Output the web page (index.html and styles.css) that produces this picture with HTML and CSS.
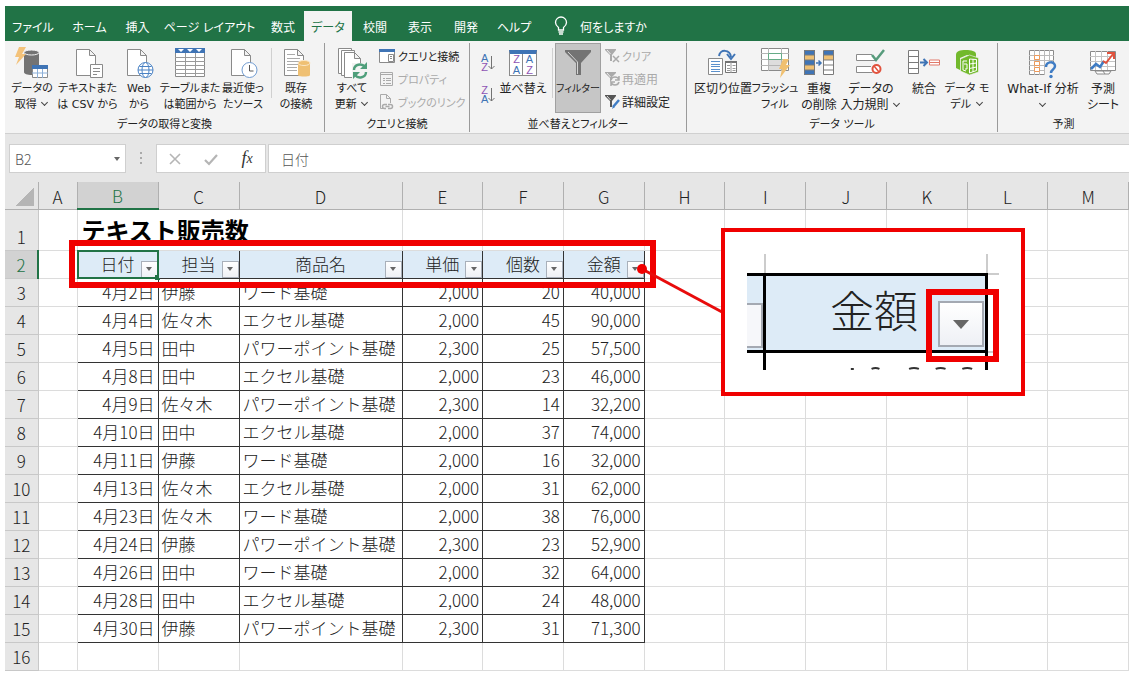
FILE: index.html
```html
<!DOCTYPE html>
<html lang="ja">
<head>
<meta charset="utf-8">
<title>テキスト販売数</title>
<link rel="stylesheet" href="styles.css">
</head>
<body>
<div class="window">
  <nav class="tabs">
    <button class="tab">ファイル</button>
    <button class="tab">ホーム</button>
    <button class="tab">挿入</button>
    <button class="tab">ページ レイアウト</button>
    <button class="tab">数式</button>
    <button class="tab tab-active">データ</button>
    <button class="tab">校閲</button>
    <button class="tab">表示</button>
    <button class="tab">開発</button>
    <button class="tab">ヘルプ</button>
    <button class="tab tell-me">
      <svg width="14" height="20" viewBox="0 0 14 20" fill="none" stroke="#fff" stroke-width="1.3"><path d="M4.500 14v-2.500C2.500 10 1.500 8.500 1.500 6.500a5.500 5.500 0 0 1 11 0c0 2-1 3.500-3 5V14zM4.500 16h5M5 18h4"/></svg>
      何をしますか
    </button>
  </nav>

  <div class="ribbon">
    <section class="group">
      <div class="tools tools-get">
        <button class="tool">
          <svg width="34" height="32" viewBox="0 0 34 32"><path d="M9 6v19c0 2 3 3 8 3s7-1 7-3V6z" fill="#737373"/><ellipse cx="16.500" cy="5.500" rx="7.500" ry="2.500" fill="#737373" stroke="#f3f3f3"/><path d="M4 0h7L7 7h4L1 18l3-8H0z" fill="#f3c27a"/><path d="M17.500 18.500h15v12h-15z" fill="#fff" stroke="#8a8a8a"/><path d="M17 18h16v4H17z" fill="#3f74b5"/><path d="M17 26h16M22.500 22v9M27.500 22v9" stroke="#8db0d8"/></svg>
          <span>データの<br>取得 <i class="chev"></i></span>
        </button>
        <button class="tool">
          <svg width="30" height="32" viewBox="0 0 30 32" fill="#fff" stroke="#8a8a8a"><path d="M3.500 2.500h13l6 6v20h-19zM16.500 2.500v6h6"/><path d="M17.500 17.500h12v13h-12z"/><path d="M20 21.500h7M20 24.500h7M20 27.500h4"/></svg>
          <span>テキストまた<br>は CSV から</span>
        </button>
        <button class="tool">
          <svg width="30" height="32" viewBox="0 0 30 32" fill="#fff" stroke="#8a8a8a"><path d="M3.500 2.500h13l6 6v20h-19zM16.500 2.500v6h6"/><g stroke="#4a82c4"><circle cx="21.500" cy="23" r="7.500"/><ellipse cx="21.500" cy="23" rx="3.500" ry="7.500"/><path d="M14 23h15M15.500 19.500h12M15.500 26.500h12"/></g></svg>
          <span>Web<br>から</span>
        </button>
        <button class="tool">
          <svg width="30" height="32" viewBox="0 0 30 32"><path d="M.5 1.500h29v28H.5z" fill="#fff" stroke="#8a8a8a"/><path d="M0 1h30v5H0z" fill="#3f74b5"/><path d="M3 2h6L6 5zM12 2h6l-3 3zM21 2h6l-3 3z" fill="#fff"/><path d="M0 10.500h30M0 14.500h30M0 18.500h30M0 22.500h30M0 26.500h30M10.500 6v24M20.500 6v24" stroke="#9a9a9a"/></svg>
          <span>テーブルまた<br>は範囲から</span>
        </button>
        <button class="tool">
          <svg width="30" height="32" viewBox="0 0 30 32" fill="#fff" stroke="#8a8a8a"><path d="M3.500 2.500h13l6 6v20h-19zM16.500 2.500v6h6"/><circle cx="21.500" cy="23" r="7.500" stroke="#6f9bd1"/><path d="M21.500 18v6h4" fill="none" stroke="#555"/></svg>
          <span>最近使っ<br>たソース</span>
        </button>
        <i class="divider"></i>
        <button class="tool">
          <svg width="30" height="32" viewBox="0 0 30 32"><path d="M3.500 2.500h13l6 6v20h-19zM16.500 2.500v6h6" fill="#fff" stroke="#8a8a8a"/><path d="M6 7.500h8M6 11.500h13M6 14.500h13M6 17.500h11M6 20.500h10M6 23.500h10" stroke="#aaa"/><path d="M17 16v12c0 2 12 2 12 0V16z" fill="#efc073"/><ellipse cx="23" cy="16" rx="6" ry="2.500" fill="#efc073" stroke="#fbe7c6"/></svg>
          <span>既存<br>の接続</span>
        </button>
      </div>
      <h2 class="group-name">データの取得と変換</h2>
    </section>

    <section class="group">
      <div class="tools tools-query">
        <button class="tool">
          <svg width="32" height="32" viewBox="0 0 32 32"><g fill="#fff" stroke="#8a8a8a"><path d="M2.500 1.500h13v25h-13z"/><path d="M5.500 3.500h13v25h-13z"/><path d="M8.500 5.500h10l6 6v19h-16zM18.500 5.500v6h6"/></g><path d="M16 16h16v16H16z" fill="#f3f3f3"/><g fill="none" stroke="#4f9f7b" stroke-width="2.400"><path d="M18 23c0-6 8-7 11-3M30 25c0 6-8 7-11 3"/></g><path d="M31 15v7h-7zM17 32v-7h7z" fill="#4f9f7b"/></svg>
          <span>すべて<br>更新 <i class="chev"></i></span>
        </button>
        <div class="stack">
          <button class="mini"><svg width="16" height="16" viewBox="0 0 16 16"><path d="M.5 1.500h15v13H.5z" fill="#fff" stroke="#8a8a8a"/><path d="M0 1h16v3H0z" fill="#3f74b5"/><path d="M9.500 6.500h5v7h-5zM11 8.500h2M11 10.500h2" fill="none" stroke="#8a8a8a"/></svg>クエリと接続</button>
          <button class="mini" disabled><svg width="16" height="16" viewBox="0 0 16 16" fill="none" stroke="#aaa"><path d="M1.500 1.500h12v13h-12zM1.500 3.500h12M4 7.500h2M7 7.500h5M4 9.500h2M7 9.500h5M4 12.500h2M7 12.500h5"/></svg>プロパティ</button>
          <button class="mini" disabled><svg width="16" height="16" viewBox="0 0 16 16" fill="none" stroke="#aaa"><path d="M5 14.500H1.500V.5h6l4 4V9M7.500.5v4h4"/><path d="M7 14.500H5.500a2 2 0 0 1 0-4H8M9 10.500h2.500a2 2 0 0 1 0 4H9M6.500 12.500h4" stroke-width="1.500"/></svg>ブックのリンク</button>
        </div>
      </div>
      <h2 class="group-name">クエリと接続</h2>
    </section>

    <section class="group">
      <div class="tools tools-sort">
        <div class="sorters">
          <button class="sorter" aria-label="昇順"><span class="az"><b class="a">A</b><b class="z">Z</b></span><svg width="7" height="16" viewBox="0 0 7 16" fill="none" stroke="#737373"><path d="M3.500 1v13M.5 11l3 3 3-3"/></svg></button>
          <button class="sorter" aria-label="降順"><span class="az"><b class="z">Z</b><b class="a">A</b></span><svg width="7" height="16" viewBox="0 0 7 16" fill="none" stroke="#737373"><path d="M3.500 1v13M.5 11l3 3 3-3"/></svg></button>
        </div>
        <button class="tool">
          <span class="sort-icon"><b class="z">Z</b><b class="a">A</b><b class="a">A</b><b class="z">Z</b></span>
          <span>並べ替え</span>
        </button>
        <i class="divider"></i>
        <button class="tool tool-on">
          <svg width="30" height="32" viewBox="0 0 30 32"><path d="M2 3h26v2L18 16v12h-5V16L2 5z" fill="#737373"/><path d="M5 5l9.500 10v12" fill="none" stroke="#d5d5d5"/></svg>
          <span class="kana">フィルター</span>
        </button>
        <div class="stack">
          <button class="mini kana" disabled><svg width="16" height="16" viewBox="0 0 16 16" fill="none" stroke="#aaa"><path d="M0 1h11v1L7 7v6H5V7L0 2z" fill="#aaa" stroke="none"/><path d="M2 2l3.500 4" stroke="#eee"/><path d="M8 8l6 6M14 8l-6 6" stroke-width="1.500"/></svg>クリア</button>
          <button class="mini" disabled><svg width="16" height="16" viewBox="0 0 16 16" fill="none" stroke="#aaa"><path d="M0 1h11v1L7 6v2L5 12V7L0 2z" fill="#aaa" stroke="none"/><path d="M2 2l3.500 4" stroke="#eee"/><path d="M6 9c1-4 7-4 8 0M14 5v4h-4M14 11c-1 4-7 4-8 0M6 15v-4h4" stroke-width="1.500"/></svg>再適用</button>
          <button class="mini"><svg width="16" height="16" viewBox="0 0 16 16" fill="none"><path d="M0 1h11v1L7 7v6H5V7L0 2z" fill="#555"/><path d="M2 2l3.500 4" stroke="#ddd"/><path d="M14 6l-6 7" stroke="#3f7cc4" stroke-width="2.500"/><path d="M8 12l-1 3 3-2z" fill="#3f7cc4"/></svg>詳細設定</button>
        </div>
      </div>
      <h2 class="group-name">並べ替えとフィルター</h2>
    </section>

    <section class="group">
      <div class="tools tools-data">
        <button class="tool">
          <svg width="30" height="32" viewBox="0 0 30 32"><path d="M.5 11.500h14v16H.5z" fill="#fff" stroke="#8a8a8a"/><path d="M3 14.500h9M3 17.500h9M3 19.500h9M3 22.500h9M3 24.500h9" stroke="#5c91cc"/><path d="M17.500 14.500h11v11h-11z" fill="#fff" stroke="#737373"/><path d="M17 14h12v2H17z" fill="#737373"/><path d="M23 15v11M19 18.500h3M24.500 18.500h3M19 21.500h3M24.500 21.500h3M19 23.500h3M24.500 23.500h3" stroke="#999"/><path d="M11 9c1-7 11-7 12 1" fill="none" stroke="#3f74b5" stroke-width="2"/><path d="M19 7l4 5 4-5" fill="none" stroke="#3f74b5" stroke-width="2"/></svg>
          <span>区切り位置</span>
        </button>
        <button class="tool">
          <svg width="30" height="32" viewBox="0 0 30 32"><path d="M1.500 1.500h27v22h-27z" fill="#fff" stroke="#8a8a8a"/><path d="M8 13h14v10H8z" fill="#ddd"/><path d="M1 6.500h28M1 12.500h28M1 18.500h28M8.500 1v23M21.500 1v23" stroke="#b5b5b5"/><path d="M8.500 6.500h13v6h-13z" fill="#fff" stroke="#65ac87"/><path d="M23 12h6l-3 6h4L20 31l2-9h-3z" fill="#f0c070"/></svg>
          <span class="kana">フラッシュ<br>フィル</span>
        </button>
        <button class="tool">
          <svg width="30" height="32" viewBox="0 0 30 32"><path d="M0 3h11v25H0z" fill="#3f74b5"/><path d="M1 8h9v5H1zM1 18h9v5H1z" fill="#efc073"/><path d="M.5 3.500h10v24H.5zM.5 8h10M.5 13h10M.5 18h10M.5 23h10" fill="none" stroke="#7a7a7a"/><path d="M20 3h10v25H20z" fill="#fff"/><path d="M20 3h10v5H20z" fill="#3f74b5"/><path d="M20 8h10v5H20z" fill="#efc073"/><path d="M19.500 3.500h10v24h-10zM20 8h10M20 13h10M20 18h10M20 23h10" fill="none" stroke="#7a7a7a"/><path d="M12 16h5M14.500 13.500L17 16l-2.500 2.500" fill="none" stroke="#3f74b5" stroke-width="1.500"/></svg>
          <span>重複<br>の削除</span>
        </button>
        <button class="tool">
          <svg width="30" height="32" viewBox="0 0 30 32"><path d="M16 7.500H.5v6h19v-2M15 19.500H.5v6h16" fill="#fff" stroke="#8a8a8a"/><path d="M16 8l4 5 8-10" fill="none" stroke="#579b7c" stroke-width="2.500"/><circle cx="20.500" cy="22" r="4" fill="#fff" stroke="#e1523d" stroke-width="2"/><path d="M18 19l5 6" stroke="#e1523d" stroke-width="1.500"/></svg>
          <span>データの<br>入力規則 <i class="chev"></i></span>
        </button>
        <button class="tool">
          <svg width="32" height="32" viewBox="0 0 32 32"><path d="M.5 3.500h10v23H.5zM.5 9.500h10M.5 15.500h10M.5 21.500h10" fill="#fff" stroke="#7a7a7a"/><path d="M12 15.500h7M15.500 12l3.500 3.500-3.500 3.500" fill="none" stroke="#3f74b5" stroke-width="2"/><path d="M21.500 13h10v5h-10zM21 15.500h10" fill="#fff" stroke="#e0796a"/></svg>
          <span>統合</span>
        </button>
        <button class="tool">
          <svg width="24" height="32" viewBox="0 0 24 32"><path d="M1 8c0-4 4-5 10-5 5 0 10 1 10 4v3l-9-2-7 3v12l-4-2z" fill="#72b92c"/><path d="M5.500 12l9-4 9 3v14l-9 3-9-4z" fill="#72b92c" stroke="#f3f3f3" stroke-width=".6"/><path d="M14.500 12v14l7-2.500V12.500zM14.500 17l7-1M14.500 21.500l7-1.500M18 12v13" fill="none" stroke="#fff" stroke-width="1"/><path d="M12 14H8v9l3 1M9 17h3v5h-2" fill="none" stroke="#fff" stroke-width="1"/></svg>
          <span class="kana">データ モ<br>デル <i class="chev"></i></span>
        </button>
      </div>
      <h2 class="group-name">データ ツール</h2>
    </section>

    <section class="group">
      <div class="tools tools-forecast">
        <button class="tool">
          <svg width="30" height="32" viewBox="0 0 30 32"><path d="M1.500 3.500h24v24h-24z" fill="#fff" stroke="#8a8a8a"/><path d="M1 8.500h25M1 13.500h25M1 18.500h25M1 23.500h25M6.500 3v25M11.500 3v25M16.500 3v25M21.500 3v25" stroke="#bbb"/><path d="M6.500 8.500h5v4h-5zM6.500 14.500h5v4h-5zM6.500 20.500h5v4h-5z" fill="#fff" stroke="#ee9a5a"/><path d="M17 15h11v16H17z" fill="#f3f3f3"/><path d="M18 20c0-6 9-6 9-1 0 4-4 3-4 7" fill="none" stroke="#3f7cc4" stroke-width="2.500"/><circle cx="23" cy="29.500" r="1.700" fill="#3f7cc4"/></svg>
          <span>What-If 分析<br><i class="chev"></i></span>
        </button>
        <button class="tool">
          <svg width="28" height="32" viewBox="0 0 28 32"><path d="M1.500 4.500h25v19h-25z" fill="#fff" stroke="#8a8a8a"/><path d="M1 9.500h25M1 14.500h25M1 19.500h25M6.500 4v19M12.500 4v19M18.500 4v19" stroke="#c4c4c4"/><path d="M6 24h8l2 3H8zM14 24h8l-2 3h-4" fill="#fff" stroke="#8a8a8a"/><path d="M2 22l5-5 4 3 4-6" fill="none" stroke="#3f7cc4" stroke-width="2.500"/><path d="M14 14l3 2 7-9M18 6h7v6" fill="none" stroke="#e1523d" stroke-width="2"/></svg>
          <span>予測<br>シート</span>
        </button>
      </div>
      <h2 class="group-name">予測</h2>
    </section>
  </div>

  <div class="formula-row">
    <div class="name-box"><input aria-label="名前ボックス" value="B2"><i class="caret"></i></div>
    <i class="grip"></i>
    <div class="entry-tools">
      <button aria-label="キャンセル"><svg width="14" height="14" viewBox="0 0 14 14" fill="none" stroke="#b5b5b5" stroke-width="1.600"><path d="M2 2l10 10M12 2L2 12"/></svg></button>
      <button aria-label="入力"><svg width="14" height="14" viewBox="0 0 14 14" fill="none" stroke="#b5b5b5" stroke-width="2.200"><path d="M1 8l4 4 8-9"/></svg></button>
      <button aria-label="関数の挿入" class="fx">f<small>x</small></button>
    </div>
    <input class="formula" aria-label="数式バー" value="日付">
  </div>

  <div class="sheet">
    <table class="grid">
      <colgroup><col class="w-row"><col class="w-a"><col class="w-b"><col class="w-b"><col class="w-d"><col span="9"></colgroup>
      <thead>
        <tr><th class="corner"><th>A<th class="col-on">B<th>C<th>D<th>E<th>F<th>G<th>H<th>I<th>J<th>K<th>L<th>M</tr>
      </thead>
      <tbody>
        <tr class="title-row"><th>1<td><td class="title" colspan="3">テキスト販売数<td><td><td><td><td><td><td><td><td></tr>
        <tr class="head-row"><th class="row-on">2<td>
          <td class="h">日付<button class="filter" aria-label="日付の絞り込み"><i class="caret"></i></button><i class="selection"></i>
          <td class="h">担当<button class="filter" aria-label="担当の絞り込み"><i class="caret"></i></button>
          <td class="h">商品名<button class="filter" aria-label="商品名の絞り込み"><i class="caret"></i></button>
          <td class="h">単価<button class="filter" aria-label="単価の絞り込み"><i class="caret"></i></button>
          <td class="h">個数<button class="filter" aria-label="個数の絞り込み"><i class="caret"></i></button>
          <td class="h">金額<button class="filter" aria-label="金額の絞り込み"><i class="caret"></i></button>
          <td><td><td><td><td><td></tr>
        <tr><th>3<td><td class="n">4月2日<td class="t">伊藤<td class="t">ワード基礎<td class="n">2,000<td class="n">20<td class="n">40,000<td><td><td><td><td><td></tr>
        <tr><th>4<td><td class="n">4月4日<td class="t">佐々木<td class="t">エクセル基礎<td class="n">2,000<td class="n">45<td class="n">90,000<td><td><td><td><td><td></tr>
        <tr><th>5<td><td class="n">4月5日<td class="t">田中<td class="t">パワーポイント基礎<td class="n">2,300<td class="n">25<td class="n">57,500<td><td><td><td><td><td></tr>
        <tr><th>6<td><td class="n">4月8日<td class="t">田中<td class="t">エクセル基礎<td class="n">2,000<td class="n">23<td class="n">46,000<td><td><td><td><td><td></tr>
        <tr><th>7<td><td class="n">4月9日<td class="t">佐々木<td class="t">パワーポイント基礎<td class="n">2,300<td class="n">14<td class="n">32,200<td><td><td><td><td><td></tr>
        <tr><th>8<td><td class="n">4月10日<td class="t">田中<td class="t">エクセル基礎<td class="n">2,000<td class="n">37<td class="n">74,000<td><td><td><td><td><td></tr>
        <tr><th>9<td><td class="n">4月11日<td class="t">伊藤<td class="t">ワード基礎<td class="n">2,000<td class="n">16<td class="n">32,000<td><td><td><td><td><td></tr>
        <tr><th>10<td><td class="n">4月13日<td class="t">佐々木<td class="t">エクセル基礎<td class="n">2,000<td class="n">31<td class="n">62,000<td><td><td><td><td><td></tr>
        <tr><th>11<td><td class="n">4月23日<td class="t">佐々木<td class="t">ワード基礎<td class="n">2,000<td class="n">38<td class="n">76,000<td><td><td><td><td><td></tr>
        <tr><th>12<td><td class="n">4月24日<td class="t">伊藤<td class="t">パワーポイント基礎<td class="n">2,300<td class="n">23<td class="n">52,900<td><td><td><td><td><td></tr>
        <tr><th>13<td><td class="n">4月26日<td class="t">田中<td class="t">ワード基礎<td class="n">2,000<td class="n">32<td class="n">64,000<td><td><td><td><td><td></tr>
        <tr><th>14<td><td class="n">4月28日<td class="t">田中<td class="t">エクセル基礎<td class="n">2,000<td class="n">24<td class="n">48,000<td><td><td><td><td><td></tr>
        <tr><th>15<td><td class="n">4月30日<td class="t">伊藤<td class="t">パワーポイント基礎<td class="n">2,300<td class="n">31<td class="n">71,300<td><td><td><td><td><td></tr>
        <tr><th>16<td><td><td><td><td><td><td><td><td><td><td><td><td></tr>
      </tbody>
    </table>

    <div class="outline"></div>
    <svg class="leader" width="90" height="54" viewBox="0 0 90 54"><path d="M6 7l80 43" stroke="#e80c0c" stroke-width="3"/><circle cx="6" cy="7" r="5" fill="#f00000"/></svg>
    <div class="callout">
      <div class="zoomed">
        <i class="z-top"></i><i class="z-top"></i><i></i>
        <div class="z-prev"><i class="z-edge"></i></div>
        <div class="z-cell">金額
          <span class="z-mark"><button class="z-filter" aria-label="金額の絞り込みを開く"><i class="z-caret"></i></button></span>
        </div>
        <i class="z-out"></i>
        <i class="z-under"></i>
        <svg class="z-next" width="222" height="17" viewBox="0 0 222 17" fill="none" stroke="#333" stroke-width="2"><path d="M86 16h3M107 16q4-2 8 0M145 16q5-2 10 0M172 16q5-2 10 0M199 16q5-2 10 0"/></svg>
        <i></i>
      </div>
    </div>
  </div>
</div>
</body>
</html>
```

FILE: styles.css
```css
* { box-sizing: border-box; }
body {
  margin: 0;
  padding: 6px 8px 8px 5px;
  background: #fff;
  color: #222;
  font-family: "DejaVu Sans", "Noto Sans CJK JP", sans-serif;
  font-size: 12px;
}
button, input { font: inherit; color: inherit; margin: 0; padding: 0; border: 0; background: none; }
svg { display: block; flex: none; }
.window { background: #e6e6e6; }

/* tab strip */
.tabs {
  display: grid;
  grid-template-columns: 56px 57px 39px 105px 42px 48px 46px 44px 48px 48px 1fr;
  height: 35px;
  padding-top: 5px;
  background: #217346;
  color: #fff;
  font-feature-settings: "palt";
}
.tab { white-space: nowrap; }
.tab-active { background: #f3f3f3; color: #217346; }
.tell-me { display: flex; align-items: center; gap: 12px; padding-left: 16px; }

/* ribbon */
.ribbon {
  display: grid;
  grid-template-columns: 319fr 145fr 217fr 311fr 132fr;
  padding: 2px 0 1px;
  background: #f3f3f3;
  border-bottom: 1px solid #d0d0d0;
  font-feature-settings: "palt";
}
.group { min-width: 0; }
.group + .group { border-left: 1px solid #9a9a9a; }
.tools { display: grid; height: 75px; }
.tools-get { grid-template-columns: 54px 57px 46px 56px 50px 6px 44px; font-size: 11px; }
.tools-query { grid-template-columns: 54px 1fr; font-size: 11px; }
.tools-sort { grid-template-columns: 26px 54px 5px 46px 1fr; }
.tools-data { grid-template-columns: 60px 44px 44px 60px 46px 40px; padding-left: 6px; }
.tools-forecast { grid-template-columns: 90px 30px; }
.kana { font-size: 11px; }
.tool {
  display: flex;
  flex-direction: column;
  align-items: center;
  gap: 2px;
  padding-top: 4px;
  line-height: 16px;
  white-space: nowrap;
}
.tool-on { height: 70px; background: #c6c6c6; border: 1px solid #a0a0a0; padding-top: 3px; }
.tool-on .kana { font-size: 10px; }
.group-name { margin: 0; font-size: 11px; font-weight: 400; line-height: 14px; text-align: center; }
.divider { width: 1px; height: 50px; margin: 5px auto 0; background: #d0d0d0; }
.chev {
  display: inline-block;
  width: 5px;
  height: 5px;
  margin: 0 2px 3px;
  border: solid #444;
  border-width: 0 1px 1px 0;
  transform: rotate(45deg);
}
.stack { display: grid; grid-template-rows: repeat(3, 23px); padding-top: 1px; }
.mini { display: flex; align-items: center; gap: 3px; white-space: nowrap; }
.tools-sort .stack { padding-left: 4px; }
.tools-sort .mini { gap: 1px; }
.mini:disabled { color: #aaa; }
.sorters { display: grid; grid-template-rows: 32px 32px; padding: 4px 0 0 11px; }
.sorter { display: flex; align-items: center; }
.az { display: grid; line-height: 9px; font-size: 11px; font-family: "Liberation Sans", sans-serif; }
.a { color: #3f74b5; }
.z { color: #8f55b5; }
.az b, .sort-icon b { font-weight: 400; }
.sort-icon {
  display: grid;
  grid-template-columns: 1fr 1fr;
  width: 28px;
  height: 26px;
  margin: 3px 0;
  border: 1px solid #8a8a8a;
  border-top: 4px solid #3f74b5;
  background: linear-gradient(90deg, #fff 12px, #8a8a8a 12px, #8a8a8a 13px, #fff 13px);
  font: 11px/10px "Liberation Sans", sans-serif;
  text-align: center;
}

/* formula row */
.formula-row {
  display: flex;
  height: 48px;
  padding: 10px 0 9px 4px;
  color: #555;
  font-family: "Noto Sans CJK JP", sans-serif;
  font-size: 14px;
  font-weight: 300;
}
.name-box, .entry-tools, .formula { background: #fff; border: 1px solid #cfcfcf; }
.name-box { display: flex; align-items: center; width: 117px; padding: 0 5px; }
.name-box input { flex: 1; min-width: 0; }
.caret { border: 3px solid transparent; border-top: 4px solid #666; border-bottom: 0; }
.grip { width: 2px; height: 12px; margin: 8px 14px; background: repeating-linear-gradient(#aaa 0 2px, transparent 2px 5px); }
.entry-tools { display: grid; grid-template-columns: repeat(3, 36px); width: 110px; margin-right: 2px; }
.entry-tools button { display: flex; align-items: center; justify-content: center; }
.entry-tools .fx { font: italic 18px "Liberation Serif", serif; color: #333; }
.fx small { font-size: 14px; }
.formula { flex: 1; min-width: 0; padding: 0 12px; border-right: 0; }

/* worksheet */
.sheet { position: relative; font-family: "Noto Sans CJK JP", sans-serif; font-size: 17px; font-weight: 300; }
.grid { width: 100%; table-layout: fixed; border-collapse: collapse; background: #fff; }
.w-row { width: 33px; }
.w-a { width: 39px; }
.w-b { width: 81px; }
.w-d { width: 163px; }
.grid th {
  padding: 0;
  background: #e6e6e6;
  border: 1px solid #c8c8c8;
  border-left: 0;
  font-weight: 300;
  line-height: 27px;
  vertical-align: bottom;
}
.grid thead th { height: 27px; border-color: #b0b0b0; border-top: 0; line-height: 25px; }
.grid td { height: 28px; padding: 0 3px; border: 1px solid #dcdcdc; line-height: 26px; white-space: nowrap; }
.grid .title-row td { height: 41px; }
.grid .corner { background: linear-gradient(135deg, transparent 50%, #b5b5b5 50%) no-repeat 10px 5px / 19px 19px #e6e6e6; }
.grid .col-on { background: #d2d2d2; color: #217346; border-bottom: 2px solid #217346; }
.grid .row-on { background: #d2d2d2; color: #217346; border-right: 2px solid #217346; }
.grid td.title { padding: 0 4px; font-size: 24px; font-weight: 700; line-height: 38px; color: #000; }
.grid td.h, .grid td.n, .grid td.t { border-color: #333; }
.grid td.h { position: relative; background: #ddebf7; text-align: center; }
.n { text-align: right; }
.filter {
  position: absolute;
  right: 0;
  bottom: 0;
  display: flex;
  align-items: center;
  justify-content: center;
  width: 17px;
  height: 17px;
  background: linear-gradient(#fff, #eef0f5);
  border: 1px solid #a9b0ba;
}
.selection { position: absolute; inset: -1px; border: 2px solid #217346; pointer-events: none; }
.selection::after { content: ""; position: absolute; right: -3px; bottom: -3px; width: 5px; height: 5px; background: #217346; }

/* annotations laid over the worksheet */
.outline { position: absolute; left: 64px; top: 58px; width: 587px; height: 48px; border: 6px solid #f00000; }
.leader { position: absolute; left: 631px; top: 80px; }
.callout { position: absolute; left: 716px; top: 46px; padding: 22px; background: #fff; border: 4px solid #f00000; }
.zoomed { display: grid; grid-template-columns: 19px 222px 11px; grid-template-rows: 19px 80px 17px; }
.z-top { border-right: 2px solid #ccc; }
.z-prev { padding-top: 27px; background: #ddebf7; border: solid #000; border-width: 3px 3px 3px 0; }
.z-edge { display: block; height: 45px; background: #f6f7fa; border: solid #a4a9b2; border-width: 2px 2px 2px 0; }
.z-cell {
  position: relative;
  padding-left: 64px;
  background: #ddebf7;
  border: solid #000;
  border-width: 3px 3px 3px 0;
  font-size: 44px;
  line-height: 66px;
  color: #222;
}
.z-out { border: solid #ccc; border-width: 2px 0; }
.z-mark { position: absolute; right: -14px; top: 13px; width: 73px; height: 73px; padding: 6px; border: 6px solid #f00000; }
.z-filter {
  display: flex;
  align-items: center;
  justify-content: center;
  width: 46px;
  height: 46px;
  background: linear-gradient(#fff, #eef0f5);
  border: 2px solid #a4a9b2;
}
.z-caret { border: 8px solid transparent; border-top: 9px solid #666; border-bottom: 0; }
.z-under { border-right: 3px solid #000; }
.z-next { border-right: 3px solid #000; }
```
